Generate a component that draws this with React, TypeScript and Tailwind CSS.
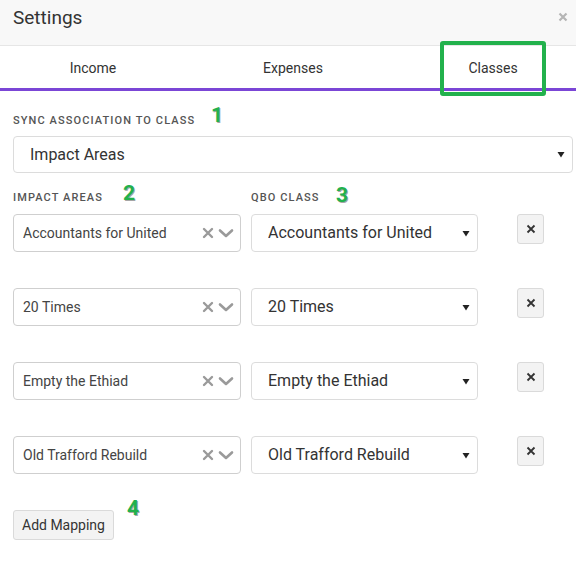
import React from "react";

const MAPPINGS = [
  "Accountants for United",
  "20 Times",
  "Empty the Ethiad",
  "Old Trafford Rebuild",
];

const TABS = ["Income", "Expenses", "Classes"];

// green step markers used in the walkthrough
function Step({ n, className }: { n: string; className: string }) {
  return (
    <span
      className={`absolute text-[21px] font-bold leading-none text-[#22b14c] [text-shadow:1px_1px_0_#a5a5a5,-1px_0_0_#fff] ${className}`}
    >
      {n}
    </span>
  );
}

function Caret() {
  return (
    <svg width="8" height="7" viewBox="0 0 8 7" className="shrink-0">
      <path d="M0.5 1h7L4 6.5z" fill="#222" />
    </svg>
  );
}

function MultiSelect({ value }: { value: string }) {
  return (
    <div className="flex h-[38px] items-center rounded-[4px] border border-[#cfcfcf] bg-white pl-[9px] pr-[6px]">
      <span className="flex-1 truncate text-[14px] text-[#444]">{value}</span>
      <svg width="12" height="12" viewBox="0 0 12 12" className="mr-[4px]">
        <path d="M2 2l8 8M10 2l-8 8" stroke="#9a9a9a" strokeWidth="2.4" strokeLinecap="round" />
      </svg>
      <svg width="16" height="12" viewBox="0 0 16 12">
        <path d="M2 3.5l6 5.5 6-5.5" stroke="#9a9a9a" strokeWidth="2.6" fill="none" strokeLinecap="round" strokeLinejoin="round" />
      </svg>
    </div>
  );
}

function NativeSelect({ value, big }: { value: string; big?: boolean }) {
  return (
    <div
      className={`flex items-center rounded-[4px] border border-[#dcdcdc] bg-white pl-[16px] pr-[7px] ${
        big ? "h-[37px]" : "h-[38px]"
      }`}
    >
      <span className="flex-1 truncate text-[16px] text-[#333]">{value}</span>
      <Caret />
    </div>
  );
}

export default function App() {
  return (
    <div className="relative h-[572px] w-[576px] overflow-hidden bg-white font-['Roboto',sans-serif] text-[#333]">
      {/* Modal header */}
      <div className="flex h-[46px] items-start justify-between border-b border-[#e6e6e6] bg-[#f8f8f8] pl-[13px] pr-[8px] pt-[4px]">
        <span className="text-[19px] text-[#333]">Settings</span>
        <svg width="10" height="10" viewBox="0 0 10 10" className="mt-[8px]">
          <path d="M1.5 1.5l7 7M8.5 1.5l-7 7" stroke="#b5b5b5" strokeWidth="2.2" />
        </svg>
      </div>

      {/* Tabs */}
      <div className="flex h-[45px] border-b-[3px] border-[#7b46d6]">
        <div className="-ml-[7px] flex">
          {TABS.map((t) => (
            <div key={t} className="flex w-[200px] items-center justify-center pt-[3px] text-[14px] text-[#333]">
              {t}
            </div>
          ))}
        </div>
      </div>

      <div className="px-[13px] pt-[23px]">
        <div className="text-[11px] font-medium uppercase leading-[14px] tracking-[0.1em] text-[#555]">
          Sync association to class
        </div>
        <div className="-mr-[10px] mt-[8px]">
          <NativeSelect value="Impact Areas" big />
        </div>

        <div className="mt-[18px] flex text-[11px] font-medium uppercase leading-[14px] tracking-[0.1em] text-[#555]">
          <div className="w-[238px]">Impact areas</div>
          <div>QBO class</div>
        </div>

        <div className="mt-[9px] flex flex-col gap-[36px]">
          {MAPPINGS.map((m) => (
            <div key={m} className="flex items-start">
              <div className="w-[228px]">
                <MultiSelect value={m} />
              </div>
              <div className="ml-[10px] w-[227px]">
                <NativeSelect value={m} />
              </div>
              <button className="ml-[39px] flex h-[30px] w-[27px] items-center justify-center rounded-[3px] border border-[#dadada] bg-[#f3f3f3]">
                <svg width="10" height="10" viewBox="0 0 10 10">
                  <path d="M1.5 1.5l7 7M8.5 1.5l-7 7" stroke="#333" strokeWidth="1.8" />
                </svg>
              </button>
            </div>
          ))}
        </div>

        <button className="mt-[36px] h-[30px] rounded-[3px] border border-[#dadada] bg-[#f3f3f3] px-[8px] text-[14px] text-[#333]">
          Add Mapping
        </button>
      </div>

      {/* walkthrough annotations */}
      <div className="absolute left-[440px] top-[41px] h-[55px] w-[106px] rounded-[3px] border-[4px] border-[#22b14c]" />
      <Step n="1" className="left-[211px] top-[105px]" />
      <Step n="2" className="left-[123px] top-[183px]" />
      <Step n="3" className="left-[336px] top-[185px]" />
      <Step n="4" className="left-[127px] top-[498px]" />
    </div>
  );
}
